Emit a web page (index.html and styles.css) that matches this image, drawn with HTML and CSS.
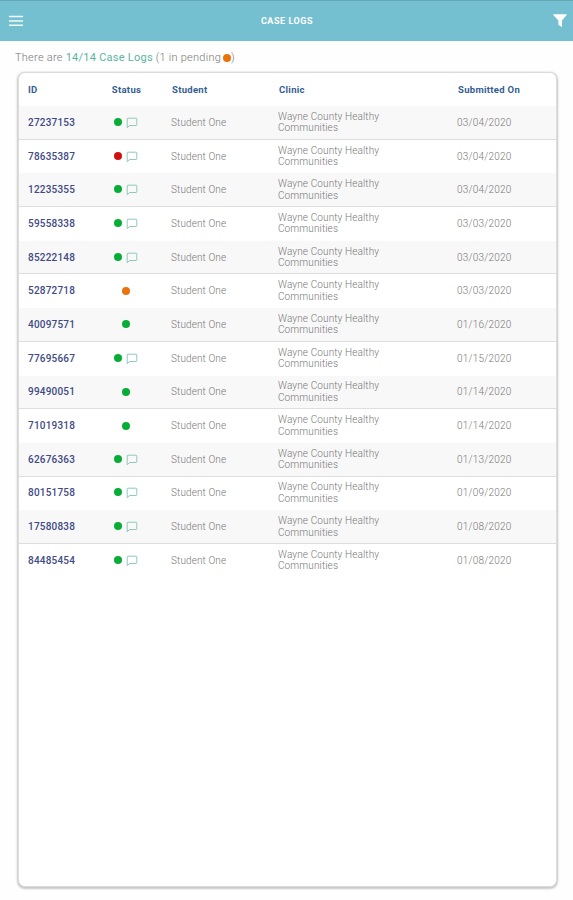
FILE: index.html
```
<!DOCTYPE html>
<html lang="en">
<head>
<meta charset="utf-8">
<title>Case Logs</title>
<link rel="stylesheet" href="styles.css">
</head>
<body>
<svg class="defs" aria-hidden="true"><symbol id="note" viewBox="0 0 12 12"><path d="M1.2 10.7V2Q1.2 1.2 2 1.2H10Q10.8 1.2 10.8 2V7.7Q10.8 8.5 10 8.5H3.6Z"/></symbol></svg>
<header class="bar">
<svg class="menu" viewBox="0 0 15 12"><path d="M0 1.2H15M0 5.9H15M0 10.6H15"/></svg>
<h1>CASE LOGS</h1>
<svg class="filter" viewBox="0 0 14 14"><path d="M.6.3H13.4Q14 .5 13.5 1.3L9 6.5V13.3L5.4 10.8V6.5L.5 1.3Q0 .5.6.3Z"/></svg>
</header>
<p class="summary">There are <span class="count">14/14 Case Logs</span> (1 in pending <i class="dot orange"></i>)</p>
<main class="card">
<div class="row head"><span>ID</span><span>Status</span><span>Student</span><span>Clinic</span><span>Submitted On</span></div>
<div class="row"><b>27237153</b><span class="status"><i class="dot"></i><svg><use href="#note"/></svg></span><span>Student One</span><span class="clinic">Wayne County Healthy<br>Communities</span><span class="date">03/04/2020</span></div>
<div class="row"><b>78635387</b><span class="status"><i class="dot red"></i><svg><use href="#note"/></svg></span><span>Student One</span><span class="clinic">Wayne County Healthy<br>Communities</span><span class="date">03/04/2020</span></div>
<div class="row"><b>12235355</b><span class="status"><i class="dot"></i><svg><use href="#note"/></svg></span><span>Student One</span><span class="clinic">Wayne County Healthy<br>Communities</span><span class="date">03/04/2020</span></div>
<div class="row"><b>59558338</b><span class="status"><i class="dot"></i><svg><use href="#note"/></svg></span><span>Student One</span><span class="clinic">Wayne County Healthy<br>Communities</span><span class="date">03/03/2020</span></div>
<div class="row"><b>85222148</b><span class="status"><i class="dot"></i><svg><use href="#note"/></svg></span><span>Student One</span><span class="clinic">Wayne County Healthy<br>Communities</span><span class="date">03/03/2020</span></div>
<div class="row"><b>52872718</b><span class="status"><i class="dot orange"></i></span><span>Student One</span><span class="clinic">Wayne County Healthy<br>Communities</span><span class="date">03/03/2020</span></div>
<div class="row"><b>40097571</b><span class="status"><i class="dot"></i></span><span>Student One</span><span class="clinic">Wayne County Healthy<br>Communities</span><span class="date">01/16/2020</span></div>
<div class="row"><b>77695667</b><span class="status"><i class="dot"></i><svg><use href="#note"/></svg></span><span>Student One</span><span class="clinic">Wayne County Healthy<br>Communities</span><span class="date">01/15/2020</span></div>
<div class="row"><b>99490051</b><span class="status"><i class="dot"></i></span><span>Student One</span><span class="clinic">Wayne County Healthy<br>Communities</span><span class="date">01/14/2020</span></div>
<div class="row"><b>71019318</b><span class="status"><i class="dot"></i></span><span>Student One</span><span class="clinic">Wayne County Healthy<br>Communities</span><span class="date">01/14/2020</span></div>
<div class="row"><b>62676363</b><span class="status"><i class="dot"></i><svg><use href="#note"/></svg></span><span>Student One</span><span class="clinic">Wayne County Healthy<br>Communities</span><span class="date">01/13/2020</span></div>
<div class="row"><b>80151758</b><span class="status"><i class="dot"></i><svg><use href="#note"/></svg></span><span>Student One</span><span class="clinic">Wayne County Healthy<br>Communities</span><span class="date">01/09/2020</span></div>
<div class="row"><b>17580838</b><span class="status"><i class="dot"></i><svg><use href="#note"/></svg></span><span>Student One</span><span class="clinic">Wayne County Healthy<br>Communities</span><span class="date">01/08/2020</span></div>
<div class="row"><b>84485454</b><span class="status"><i class="dot"></i><svg><use href="#note"/></svg></span><span>Student One</span><span class="clinic">Wayne County Healthy<br>Communities</span><span class="date">01/08/2020</span></div>
</main>
</body>
</html>
```
FILE: styles.css
```
* { box-sizing: border-box; }
body { margin: 0; height: 900px; overflow: hidden; background: #fefefe; color: #999; font-family: Roboto, "Liberation Sans", sans-serif; }
.defs { display: none; }
.bar { display: flex; align-items: center; justify-content: space-between; height: 41px; padding: 0 6px 0 9px; border-top: 1px solid #64a9b8; background: #74bfd0; color: #fff; }
.bar h1 { margin: 0 2px 0 0; font-size: 9px; font-weight: 700; letter-spacing: 0.55px; }
.menu { width: 14px; height: 12px; fill: none; stroke: #f3fbfc; stroke-width: 1.6; }
.filter { width: 14px; height: 14px; fill: #fff; }
.summary { margin: 9px 0 0 15px; height: 16px; line-height: 16px; font-size: 11px; font-weight: 300; letter-spacing: 0.25px; color: #777; white-space: nowrap; }
.count { color: #5bb5a2; font-weight: 400; }
.dot { display: inline-block; flex: none; width: 8px; height: 8px; border-radius: 50%; background: #08ad37; }
.summary .dot { margin-left: -1px; vertical-align: -1px; }
.dot.red { background: #cf1010; }
.dot.orange { background: #e8730c; }
.card { width: 539px; height: 815px; margin: 6px 0 0 18px; padding-top: 1px; border: 1px solid #dcdcdc; border-radius: 7px; background: #fff; box-shadow: 0 1px 2px 1px #c8c8c8; }
.row { display: grid; grid-template-columns: 74px 49px 108px 179px 1fr; align-items: center; height: 33.69px; padding: 0 0 1px 9px; font-size: 10px; font-weight: 300; letter-spacing: 0.12px; color: #777; }
.row:nth-child(even) { background: #f8f8f8; border-bottom: 1px solid #dedede; padding-bottom: 0; }
.row b { font-weight: 500; color: #414a85; letter-spacing: 0.2px; }
.row > :nth-child(3) { padding-left: 20px; }
.row > :nth-child(4) { padding-left: 19px; }
.row > :nth-child(5) { padding-left: 19px; }
.row .date { letter-spacing: 0.22px; }
.row > :nth-child(2) { justify-self: center; }
.head { height: 32px; font-weight: 700; font-size: 9.5px; letter-spacing: 0.3px; color: #335d91; }
.head > :nth-child(n+3) { transform: translateX(1px); }
.status { display: flex; align-items: center; gap: 4px; padding-right: 1px; }
.status svg { width: 12px; height: 12px; margin-top: 1px; fill: none; stroke: #83c4b6; stroke-width: 0.9; }
.status .dot:not(:only-child) { margin-top: -1px; }
.clinic { line-height: 11.5px; }
```
